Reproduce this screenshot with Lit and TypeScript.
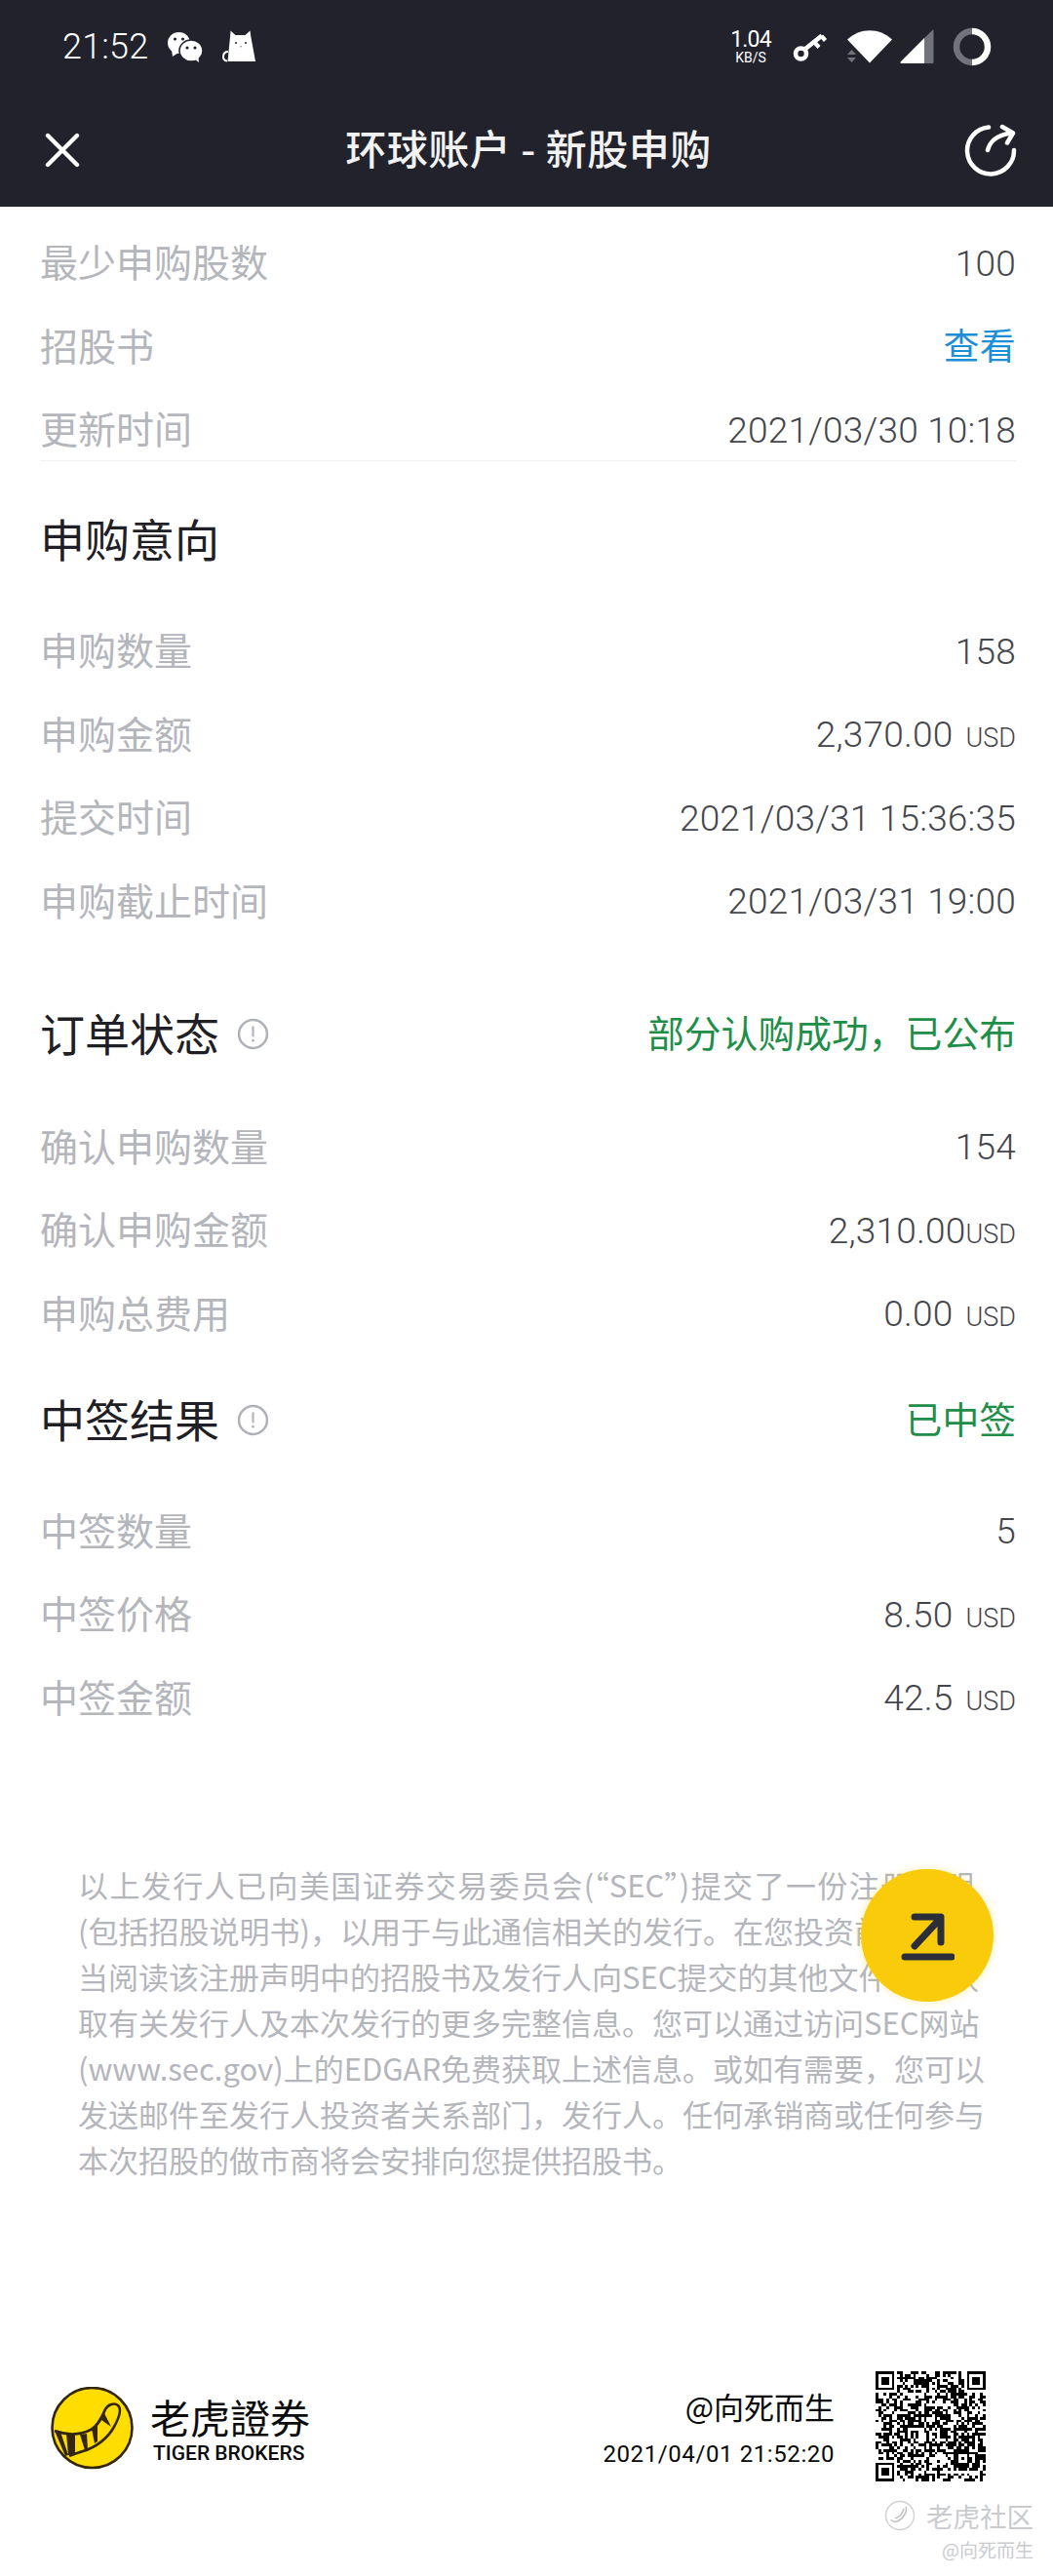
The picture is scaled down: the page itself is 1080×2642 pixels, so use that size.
import { LitElement, css, html, svg } from 'lit';
import { customElement } from 'lit/decorators.js';

// pseudo random QR modules with the three finders and one alignment block
function qrPath(size: number) {
  let seed = 20210401;
  const next = () => {
    seed = (seed * 1103515245 + 12345) & 0x7fffffff;
    return (seed >> 16) % 100 < 52;
  };
  const inFinder = (x: number, y: number, ox: number, oy: number) =>
    x >= ox - 1 && x <= ox + 7 && y >= oy - 1 && y <= oy + 7;
  const finderOn = (x: number, y: number, ox: number, oy: number) => {
    const dx = x - ox;
    const dy = y - oy;
    if (dx < 0 || dx > 6 || dy < 0 || dy > 6) return false;
    return dx === 0 || dx === 6 || dy === 0 || dy === 6 || (dx >= 2 && dx <= 4 && dy >= 2 && dy <= 4);
  };
  const finders = [[0, 0], [size - 7, 0], [0, size - 7]];
  const ax = size - 9;
  let d = '';
  for (let y = 0; y < size; y++) {
    for (let x = 0; x < size; x++) {
      let on = next();
      if (finders.some(([ox, oy]) => inFinder(x, y, ox, oy))) {
        on = finders.some(([ox, oy]) => finderOn(x, y, ox, oy));
      } else if (x >= ax - 2 && x <= ax + 2 && y >= ax - 2 && y <= ax + 2) {
        on = Math.max(Math.abs(x - ax), Math.abs(y - ax)) !== 1;
      }
      if (on) d += `M${x} ${y}h1v1h-1z`;
    }
  }
  return d;
}

type Row = { label: string; value: string; unit?: string; tight?: boolean; link?: boolean };

const basics: Row[] = [
  { label: '最少申购股数', value: '100' },
  { label: '招股书', value: '查看', link: true },
  { label: '更新时间', value: '2021/03/30 10:18' },
];
const intent: Row[] = [
  { label: '申购数量', value: '158' },
  { label: '申购金额', value: '2,370.00', unit: 'USD' },
  { label: '提交时间', value: '2021/03/31 15:36:35' },
  { label: '申购截止时间', value: '2021/03/31 19:00' },
];
const order: Row[] = [
  { label: '确认申购数量', value: '154' },
  { label: '确认申购金额', value: '2,310.00', unit: 'USD', tight: true },
  { label: '申购总费用', value: '0.00', unit: 'USD' },
];
const allot: Row[] = [
  { label: '中签数量', value: '5' },
  { label: '中签价格', value: '8.50', unit: 'USD' },
  { label: '中签金额', value: '42.5', unit: 'USD' },
];

const notice = [
  '以上发行人已向美国证券交易委员会(“SEC”)提交了一份注册声明',
  '(包括招股说明书)，以用于与此通信相关的发行。在您投资前，您应',
  '当阅读该注册声明中的招股书及发行人向SEC提交的其他文件，以获',
  '取有关发行人及本次发行的更多完整信息。您可以通过访问SEC网站',
  '(www.sec.gov)上的EDGAR免费获取上述信息。或如有需要，您可以',
  '发送邮件至发行人投资者关系部门，发行人。任何承销商或任何参与',
];

@customElement('app-root')
export class AppRoot extends LitElement {
  renderRows(rows: Row[]) {
    return html`
      <div class="rows">
        ${rows.map(
          (r) => html`
            <div class="row">
              <span class="label">${r.label}</span>
              <span class="value ${r.link ? 'link' : ''}">
                ${r.value}${r.unit
                  ? html`<span class="unit ${r.tight ? 'tight' : ''}">${r.unit}</span>`
                  : ''}
              </span>
            </div>
          `,
        )}
      </div>
    `;
  }

  infoIcon() {
    return html`<svg class="info" viewBox="0 0 32 32">
      <circle cx="16" cy="16" r="14" fill="none" stroke="#aeb1b7" stroke-width="2.4" />
      <path d="M16 9v9" stroke="#aeb1b7" stroke-width="2" stroke-linecap="round" />
      <circle cx="16" cy="22.5" r="1.3" fill="#aeb1b7" />
    </svg>`;
  }

  render() {
    return html`
      <header class="top">
        <div class="status">
          <div class="status-left">
            <span class="time">21:52</span>
            <svg class="wechat" width="37" height="32" viewBox="0 0 37 32">
              <ellipse cx="12.5" cy="12" rx="11.5" ry="11" fill="#fff" />
              <path d="M5 19l1 7 6-4z" fill="#fff" />
              <ellipse cx="25" cy="20" rx="12" ry="11" fill="#fff" stroke="#21222c" stroke-width="1.6" />
              <path d="M29 29l4 3-.5-6z" fill="#fff" />
              <circle cx="8.5" cy="8" r="1.6" fill="#21222c" />
              <circle cx="16.5" cy="8" r="1.6" fill="#21222c" />
              <circle cx="21" cy="17" r="1.6" fill="#21222c" />
              <circle cx="29" cy="17" r="1.6" fill="#21222c" />
            </svg>
            <svg class="cat" width="36" height="33" viewBox="0 0 36 33">
              <path d="M9.5 0.5l5 4.5h10l5-4.5 1 7 4.5 24.5H6.5L9 7z" fill="#fff" />
              <path d="M7 22C1 22 0 31 6 31.5" fill="none" stroke="#fff" stroke-width="2" />
              <circle cx="15" cy="13" r="1" fill="#21222c" />
              <circle cx="25" cy="13" r="1" fill="#21222c" />
              <path d="M19 16.5h2l-1 1z" fill="#21222c" />
            </svg>
          </div>
          <div class="status-right">
            <div class="speed"><b>1.04</b><small>KB/S</small></div>
            <svg class="key" width="36" height="32" viewBox="0 0 36 32">
              <circle cx="8.5" cy="23" r="5.5" fill="none" stroke="#fff" stroke-width="4.6" />
              <path d="M12.5 18.5L30 4.5" stroke="#fff" stroke-width="4.6" />
              <path d="M22 11l5 5.5M29.5 5l4 4.5" stroke="#fff" stroke-width="4.2" />
            </svg>
            <svg class="wifi" width="48" height="34" viewBox="0 0 48 34">
              <path d="M1 9.5C14-3 34-3 47 9.5L24 33.5z" fill="#fff" />
              <path d="M1 25l4.5-5 4.5 5zM1 28l9 0-4.500 5z" fill="#71727a" />
            </svg>
            <svg class="signal" width="35" height="35" viewBox="0 0 35 35">
              <path d="M25 9L34.500 0v34a1 1 0 0 1-1 1H25z" fill="#71727a" />
              <path d="M25 9v26H1.500a1 1 0 0 1-.7-1.700z" fill="#fff" />
            </svg>
            <svg class="ring" width="40" height="40" viewBox="0 0 40 40">
              <path d="M20 4a16 16 0 0 1 0 32" fill="none" stroke="#fff" stroke-width="6.500" />
              <path d="M20 36a16 16 0 0 1 0-32" fill="none" stroke="#71727a" stroke-width="6.500" />
            </svg>
          </div>
        </div>
        <nav class="nav">
          <svg class="close" width="36" height="36" viewBox="0 0 36 36">
            <path d="M3 3l30 30M33 3L3 33" stroke="#fff" stroke-width="4.400" stroke-linecap="round" />
          </svg>
          <h1 class="title">环球账户 - 新股申购</h1>
          <svg class="refresh" width="56" height="54" viewBox="0 0 56 54">
            <path d="M26 3.500A24 24 0 1 0 52 27" fill="none" stroke="#fff" stroke-width="4.500" stroke-linecap="round" />
            <path d="M25 27C27 19 34 11 50 9.500M40 3l11 6.500-6 10" fill="none" stroke="#fff" stroke-width="4.500" stroke-linecap="round" stroke-linejoin="round" />
          </svg>
        </nav>
      </header>

      <main class="sheet">
        <section class="basics">${this.renderRows(basics)}</section>

        <h2 class="heading first">申购意向</h2>
        ${this.renderRows(intent)}

        <div class="head-row order">
          <h2 class="heading">订单状态</h2>
          ${this.infoIcon()}
          <span class="status-text">部分认购成功，已公布</span>
        </div>
        ${this.renderRows(order)}

        <div class="head-row allot">
          <h2 class="heading">中签结果</h2>
          ${this.infoIcon()}
          <span class="status-text">已中签</span>
        </div>
        ${this.renderRows(allot)}

        <div class="notice">
          ${notice.map((line) => html`<div class="line">${line}</div>`)}
          <div class="line last">本次招股的做市商将会安排向您提供招股书。</div>
        </div>

        <footer class="foot">
          <div class="brand">
            <svg class="logo" width="86" height="86" viewBox="7 4 86 86">
              <circle cx="49.500" cy="46" r="41" fill="#ffdd00" stroke="#33260f" stroke-width="2.600" />
              <path
                d="M11 49C22 53 36 54 48 48 56 44 60 34 63 27 66 22 72 20 76 23 80 27 77 36 72 45 66 56 54 66 40 70 34 72 30 73 26 75"
                fill="none"
                stroke="#33260f"
                stroke-width="2.600"
                stroke-linejoin="round"
              />
              <path
                d="M11 49l6 1 8 24-3 1zM23 52l9 1 0 20-7 1zM37 53l7-1 1 17-3 0zM49 47l6-6 0 19-3 2zM59 38l3-7 7 14z"
                fill="#33260f"
              />
            </svg>
            <div class="brand-text">
              <div class="brand-cn">老虎證券</div>
              <div class="brand-en">TIGER BROKERS</div>
            </div>
          </div>
          <div class="share">
            <div class="share-text">
              <div class="user">@向死而生</div>
              <div class="stamp">2021/04/01 21:52:20</div>
            </div>
            <svg class="qr" width="113" height="113" viewBox="0 0 41 41" shape-rendering="crispEdges">
              ${svg`<path d=${qrPath(41)} fill="#000" />`}
            </svg>
          </div>
        </footer>
      </main>

      <button class="fab" aria-label="分享">
        <svg width="56" height="56" viewBox="0 0 56 56">
          <path d="M15 39L41 11M15 9h27v26" fill="none" stroke="#2b2d38" stroke-width="7" stroke-linecap="round" stroke-linejoin="round" />
          <path d="M5 50h48" stroke="#2b2d38" stroke-width="7" stroke-linecap="round" />
        </svg>
      </button>

      <div class="mark">
        <div class="mark-top">
          <svg width="32" height="32" viewBox="0 0 32 32">
            <circle cx="16" cy="16" r="14.500" fill="none" stroke="#cfd1d4" stroke-width="1.400" />
            <path d="M22 7c2 4-2 12-9 15-3 1-5 0-6-2M20 9c-1 5-5 9-9 10" fill="none" stroke="#bfc1c5" stroke-width="1.600" />
          </svg>
          <span class="mark-cn">老虎社区</span>
        </div>
        <div class="mark-user">@向死而生</div>
      </div>
    `;
  }

  static styles = css`
    :host {
      display: block;
      position: relative;
      width: 1080px;
      height: 2642px;
      overflow: hidden;
      background: #fff;
      font-family: 'Noto Sans CJK SC', 'Noto Sans', sans-serif;
    }

    .top {
      height: 212px;
      background: #21222c;
      color: #fff;
    }

    .status {
      height: 95px;
      padding: 0 63px 0 64px;
      display: flex;
      align-items: center;
      justify-content: space-between;
    }

    .status-left,
    .status-right {
      display: flex;
      align-items: center;
    }

    .time {
      font: 300 36px Roboto, sans-serif;
      letter-spacing: 0.2px;
      width: 107px;
    }

    .cat {
      margin-left: 19px;
    }

    .speed {
      width: 42px;
      display: flex;
      flex-direction: column;
      align-items: center;
      font-family: Roboto, sans-serif;
      margin-right: 22px;
    }

    .speed b {
      font-weight: 400;
      font-size: 23px;
      line-height: 22px;
      letter-spacing: -0.8px;
    }

    .speed small {
      font-size: 14px;
      line-height: 14px;
    }

    .wifi {
      margin-left: 19px;
    }

    .signal {
      margin-left: 7px;
    }

    .ring {
      margin-left: 19px;
    }

    .nav {
      height: 117px;
      padding: 0 36px 0 46px;
      display: flex;
      align-items: center;
      justify-content: space-between;
    }

    .title {
      margin: -6px 0 0 14px;
      font-size: 42px;
      font-weight: 500;
      letter-spacing: 0.5px;
      color: #f2f2f3;
    }

    .sheet {
      padding: 33px 38px 0 41px;
    }

    .rows {
      display: flex;
      flex-direction: column;
      gap: 35.5px;
    }

    .row {
      height: 50px;
      display: flex;
      align-items: center;
      justify-content: space-between;
    }

    .label {
      margin-top: -6px;
      font-size: 39px;
      color: #b4b6bc;
    }

    .value {
      font: 300 37px Roboto, 'Noto Sans CJK SC', sans-serif;
      letter-spacing: 0.2px;
      color: #44464d;
      white-space: nowrap;
    }

    .value.link {
      margin-top: -6px;
      font-family: 'Noto Sans CJK SC', sans-serif;
      font-weight: 400;
      font-size: 37px;
      color: #1d8fd6;
    }

    .unit {
      margin-left: 13px;
      font-size: 27px;
      letter-spacing: 0;
    }

    .unit.tight {
      margin-left: 0;
    }

    .basics {
      padding-bottom: 6px;
      border-bottom: 1px solid #eeeff0;
    }

    .heading {
      margin: -6px 0 0;
      font-size: 46px;
      line-height: 60px;
      font-weight: 400;
      color: #1f2026;
    }

    .heading.first {
      margin: 48px 0 62px;
    }

    .head-row {
      display: flex;
      align-items: center;
      height: 60px;
    }

    .head-row.order {
      margin: 81px 0 61px;
    }

    .head-row.allot {
      margin: 54px 0 59px;
    }

    .info {
      width: 33px;
      height: 33px;
      margin-left: 18px;
    }

    .status-text {
      margin: -6px 0 0 auto;
      font-size: 37.800px;
      color: #1f8e49;
    }

    .notice {
      width: 919px;
      margin: 142px 0 0 39px;
      font-size: 31px;
      line-height: 47px;
      color: #b4b6bc;
    }

    .line {
      white-space: nowrap;
      text-align: justify;
      text-align-last: justify;
    }

    .line.last {
      text-align-last: left;
    }

    .foot {
      margin-top: 194px;
      display: flex;
      justify-content: space-between;
      align-items: flex-start;
    }

    .brand {
      display: flex;
      align-items: center;
      margin: 16px 0 0 11px;
    }

    .brand-text {
      margin-left: 16px;
      color: #0c0c0c;
    }

    .brand-cn {
      font-size: 41px;
      line-height: 48px;
    }

    .brand-en {
      font: 500 21px/24px Roboto, sans-serif;
      margin: 2px 0 0 3px;
    }

    .share {
      display: flex;
      margin-right: 31px;
    }

    .share-text {
      text-align: right;
      color: #0a0a0a;
      margin: 16px 42px 0 0;
    }

    .user {
      font-size: 31px;
      line-height: 40px;
    }

    .stamp {
      margin-top: 14px;
      font: 400 24px/30px Roboto, sans-serif;
      letter-spacing: 0.6px;
    }

    .fab {
      position: absolute;
      left: 883px;
      top: 1917px;
      width: 136px;
      height: 136px;
      padding: 0;
      border: 0;
      border-radius: 50%;
      background: #f9cb0b;
      box-shadow: 0 0 8px rgba(249, 203, 11, 0.35);
      display: flex;
      align-items: center;
      justify-content: center;
    }

    .mark {
      position: absolute;
      right: 20px;
      top: 2562px;
      text-align: right;
      color: #c9cbce;
    }

    .mark-top {
      display: flex;
      align-items: center;
      gap: 11px;
    }

    .mark-cn {
      font-size: 27.500px;
      line-height: 36px;
    }

    .mark-user {
      margin-top: 4px;
      font-size: 19px;
      line-height: 26px;
    }
  `;
}

declare global {
  interface HTMLElementTagNameMap {
    'app-root': AppRoot;
  }
}
